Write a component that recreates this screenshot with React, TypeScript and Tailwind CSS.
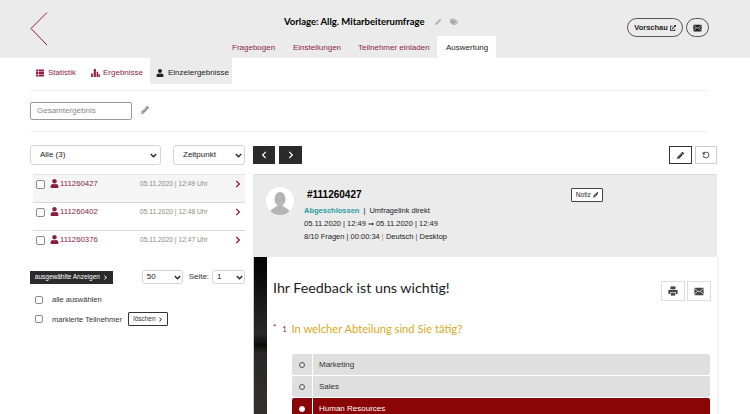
import React from 'react';
import { FaUser, FaTags, FaPencilAlt, FaChevronRight, FaChevronLeft, FaThList, FaExternalLinkAlt, FaLongArrowAltRight } from 'react-icons/fa';
import { MdRefresh } from 'react-icons/md';

const RED = 'text-[#8c1d3f]';

const MailIcon = ({ className = '' }: { className?: string }) => (
  <svg viewBox="0 0 12 10" className={className}>
    <rect x="0.5" y="0.5" width="11" height="9" rx="0.8" fill="currentColor" />
    <path d="M0.8 1.6 L6 5.6 L11.2 1.6 M0.8 8.6 L4.4 4.6 M11.2 8.6 L7.6 4.6" fill="none" stroke="#fff" strokeWidth="0.8" />
  </svg>
);

const PrintIcon = ({ className = '' }: { className?: string }) => (
  <svg viewBox="0 0 12 12" className={className}>
    <path d="M3 0.5 H9 V4 H3 Z" fill="currentColor" />
    <path d="M0.5 4.8 H11.5 V9.5 H9.5 V7.5 H2.5 V9.5 H0.5 Z" fill="currentColor" />
    <path d="M3.3 8.3 H8.7 V11.5 H3.3 Z" fill="currentColor" />
  </svg>
);

const BarsIcon = ({ className = '' }: { className?: string }) => (
  <svg viewBox="0 0 10 9" className={className}>
    <path d="M0 5 H2 V9 H0 Z M3 0 H5.4 V9 H3 Z M6.2 3 H8 V9 H6.2 Z M8.5 6 H10 V9 H8.5 Z" fill="currentColor" />
  </svg>
);

const Check = ({ className = '' }: { className?: string }) => (
  <span className={`block w-[8px] h-[8px] rounded-[2px] border border-[#8a8a8a] bg-white shrink-0 ${className}`} />
);

const Select = ({ label, className = '' }: { label: string; className?: string }) => (
  <div className={`flex items-center justify-between bg-white border border-[#d4d4d4] rounded-[3px] text-[#222] ${className}`}>
    <span>{label}</span>
    <svg width="7" height="5" viewBox="0 0 7 5" className="shrink-0">
      <path d="M0.8 1 L3.5 3.8 L6.2 1" fill="none" stroke="#222" strokeWidth="1.3" />
    </svg>
  </div>
);

const ListRow = ({ id, date, active }: { id: string; date: string; active?: boolean }) => (
  <div className={`h-[28px] border-b border-[#d8d8d8] pt-[3px] pl-[3px] pr-[3px] flex items-start ${active ? 'bg-[#f5f5f5]' : ''}`}>
    <Check className="mt-[2px] w-[9px] h-[9px]" />
    <FaUser className={`ml-[5px] mt-[1px] text-[9px] ${RED}`} />
    <span className={`ml-[1px] w-[80px] text-[7.8px] leading-[11px] ${RED}`}>{id}</span>
    <span className="text-[6.7px] leading-[11px] text-[#8a8a7a] flex-1 whitespace-nowrap">{date}</span>
    <FaChevronRight className="mt-[2px] text-[8px] text-[#8b0f2e]" />
  </div>
);

const Answer = ({ label, selected }: { label: string; selected?: boolean }) => (
  <div className="flex gap-[1px] h-[21px] mb-[1px]">
    <div className={`w-[20px] flex items-center justify-center rounded-l-[2px] ${selected ? 'bg-[#8a0505]' : 'bg-[#dfdfdf]'}`}>
      <span className={`block w-[6px] h-[6px] rounded-full border ${selected ? 'bg-white border-white' : 'border-[#555]'}`} />
    </div>
    <div className={`flex-1 flex items-center pl-[6px] text-[8px] rounded-r-[2px] ${selected ? 'bg-[#8a0505] text-white' : 'bg-[#dfdfdf] text-[#333]'}`}>
      {label}
    </div>
  </div>
);

export default function App() {
  return (
    <div className="w-[750px] h-[414px] overflow-hidden bg-white font-['Liberation_Sans',Arial,sans-serif]">
      {/* Header */}
      <header className="h-[58px] bg-[#ebebeb] flex">
        <div className="w-[232px] pl-[30px] pt-[12px]">
          <svg width="18" height="34" viewBox="0 0 18 34">
            <path d="M17 0.5 L1 16.5 L17 33" fill="none" stroke="#8c1d3f" strokeWidth="1" />
          </svg>
        </div>
        <div className="w-[264px] flex flex-col">
          <div className="h-[36px] pl-[52px] pt-[15px] flex items-start">
            <span className="font-['Lato',sans-serif] font-bold text-[9.5px] leading-[14px] text-black whitespace-nowrap">Vorlage: Allg. Mitarbeiterumfrage</span>
            <FaPencilAlt className="ml-[10px] mt-[4px] text-[6px] text-[#aaa]" />
            <FaTags className="ml-[9px] mt-[3px] text-[8px] text-[#aaa]" />
          </div>
          <nav className={`flex-1 flex text-[8px] ${RED}`}>
            <span className="pt-[6px] w-[61px]">Fragebogen</span>
            <span className="pt-[6px] w-[65px]">Einstellungen</span>
            <span className="pt-[6px] w-[79px] whitespace-nowrap">Teilnehmer einladen</span>
            <span className="pt-[6px] w-[59px] pl-[9px] bg-white text-[#222]">Auswertung</span>
          </nav>
        </div>
        <div className="flex-1 flex justify-end items-start pt-[18px] pr-[41px] gap-[3px]">
          <div className="h-[19px] w-[56px] rounded-full border border-[#555] flex items-center justify-center gap-[2px] text-[7.5px] font-bold text-[#222]">
            Vorschau <FaExternalLinkAlt className="text-[6px]" />
          </div>
          <div className="h-[19px] w-[23px] rounded-full border border-[#555] flex items-center justify-center text-[#222]">
            <MailIcon className="w-[9px] h-[8px]" />
          </div>
        </div>
      </header>

      {/* Sub tabs */}
      <div className="mx-[30px] w-[678px] h-[33px] border-b border-[#eeeeee] flex items-start text-[8px]">
        <div className={`flex items-center h-[26px] pt-[4px] pl-[6px] w-[61px] gap-[4px] ${RED}`}>
          <FaThList className="text-[8px]" /> Statistik
        </div>
        <div className={`flex items-center h-[26px] pt-[4px] w-[59px] gap-[3px] ${RED}`}>
          <BarsIcon className="w-[9px] h-[8px]" /> Ergebnisse
        </div>
        <div className="flex items-center h-[26px] pt-[4px] w-[82px] pl-[6px] gap-[4px] bg-[#ebebeb] text-[#222]">
          <FaUser className="text-[8px]" /> Einzelergebnisse
        </div>
      </div>

      {/* Result name */}
      <div className="mx-[30px] w-[678px] h-[41px] border-b border-[#eeeeee] flex items-start pt-[11px]">
        <div className="w-[102px] h-[18px] rounded-[2px] border border-[#999] flex items-center pl-[6px] text-[8px] text-[#888]">Gesamtergebnis</div>
        <FaPencilAlt className="ml-[9px] mt-[4px] text-[8px] text-[#888]" />
      </div>

      {/* Main */}
      <div className="flex pl-[30px] pt-[13px]">
        <aside className="w-[215px] shrink-0">
          <div className="flex justify-between h-[20px] text-[8px]">
            <Select label="Alle (3)" className="w-[131px] pl-[9px] pr-[3px]" />
            <Select label="Zeitpunkt" className="w-[72px] pl-[9px] pr-[2px]" />
          </div>
          <div className="mt-[9px] ml-[3px] border-t border-[#e4e4e4]">
            <ListRow id="111260427" date="05.11.2020 | 12:49 Uhr" active />
            <ListRow id="111260402" date="05.11.2020 | 12:48 Uhr" />
            <div className="[&>div]:border-b-0"><ListRow id="111260376" date="05.11.2020 | 12:47 Uhr" /></div>
          </div>
          <div className="mt-[11px] flex items-center">
            <div className="w-[83px] h-[13px] bg-[#2b2b2b] flex items-center justify-center gap-[3px] text-[6.5px] text-white whitespace-nowrap">
              ausgewählte Anzeigen <FaChevronRight className="text-[5px]" />
            </div>
            <Select label="50" className="ml-[29px] w-[41px] h-[14px] pl-[4px] pr-[1px] text-[8px]" />
            <span className="ml-[6px] text-[8px] text-[#333]">Seite:</span>
            <Select label="1" className="ml-[3px] w-[33px] h-[14px] pl-[4px] pr-[1px] text-[8px]" />
          </div>
          <div className="mt-[10px] flex items-center gap-[9px] pl-[5px] text-[7.5px] text-[#333]">
            <Check /> alle auswählen
          </div>
          <div className="mt-[7px] flex items-center pl-[5px] text-[7.5px] text-[#333]">
            <Check />
            <span className="ml-[9px]">markierte Teilnehmer</span>
            <div className="ml-[6px] h-[14px] w-[40px] border border-[#333] rounded-[1px] flex items-center justify-center gap-[2px] text-[6.5px]">
              löschen <FaChevronRight className="text-[5px]" />
            </div>
          </div>
        </aside>

        <main className="ml-[8px] w-[466px] shrink-0">
          <div className="h-[29px] flex items-start pt-[1px] pr-[2px]">
            <div className="w-[22px] h-[18px] bg-[#2b2b2b] text-white flex items-center justify-center"><FaChevronLeft className="text-[8px]" /></div>
            <div className="ml-[4px] w-[23px] h-[18px] bg-[#2b2b2b] text-white flex items-center justify-center"><FaChevronRight className="text-[8px]" /></div>
            <div className="ml-auto w-[23px] h-[18px] border border-[#333] flex items-center justify-center"><FaPencilAlt className="text-[7px] text-[#222]" /></div>
            <div className="ml-[3px] w-[22px] h-[18px] border border-[#ccc] flex items-center justify-center"><MdRefresh className="text-[10px] text-[#333] -scale-x-100" /></div>
          </div>

          <div className="h-[83px] bg-[#ebebeb] border-t border-[#d8d8d8] rounded-t-[2px] flex pl-[13px] pt-[12px] mr-[2px]">
            <div className="w-[28px] h-[28px] rounded-full bg-white overflow-hidden flex items-end justify-center shrink-0">
              <svg width="24" height="25" viewBox="0 0 24 25">
                <ellipse cx="12" cy="9" rx="5.5" ry="7" fill="#b5b5b5" />
                <path d="M1 25 C2 18 8 18 10 15 L14 15 C16 18 22 18 23 25 Z" fill="#b5b5b5" />
              </svg>
            </div>
            <div className="ml-[10px] w-[265px] text-[7.5px] text-[#222]">
              <div className="pl-[3px] pt-[2px] font-bold text-[10px] leading-[12px] text-black">#111260427</div>
              <div className="mt-[3px] leading-[13px]">
                <span className="font-bold text-[#2a9d9d]">Abgeschlossen</span>
                <span className="mx-[4px]">|</span>Umfragelink direkt
              </div>
              <div className="leading-[13px] flex items-center whitespace-pre">05.11.2020 | 12:49 <FaLongArrowAltRight className="text-[6px] mr-[2px]" />05.11.2020 | 12:49</div>
              <div className="leading-[13px]">8/10 Fragen | 00:00:34 <span className="text-[#c98a2b]">|</span> Deutsch <span className="text-[#2b4a9d]">|</span> Desktop</div>
            </div>
            <div className="ml-[2px] mt-[1px] w-[32px] h-[14px] bg-white border border-[#444] rounded-[1px] flex items-center justify-center gap-[2px] text-[6.5px] text-[#222]">
              Notiz <FaPencilAlt className="text-[5.5px]" />
            </div>
          </div>

          <div className="h-[160px] flex bg-white border-r-2 border-[#f3f3f3]">
            <div className="w-[14px] border-l border-[#cccccc] bg-[linear-gradient(to_bottom,#050505_0%,#0a0a0a_12%,#1c1c1c_30%,#2a2a2a_48%,#0c0c0c_55%,#2b2927_60%,#332f2c_100%)]" />
            <div className="flex-1 relative pl-[6px]">
              <div className="font-['Lato',sans-serif] text-[14.25px] leading-[20px] text-[#222] pt-[21px]">Ihr Feedback ist uns wichtig!</div>
              <div className="absolute right-[6px] top-[24px] flex gap-[2px]">
                <div className="w-[24px] h-[20px] border border-[#ddd] flex items-center justify-center text-[#444]"><PrintIcon className="w-[10px] h-[10px]" /></div>
                <div className="w-[24px] h-[20px] border border-[#ddd] flex items-center justify-center text-[#444]"><MailIcon className="w-[10px] h-[9px]" /></div>
              </div>
              <div className="mt-[24px] flex items-start font-['Lato',sans-serif]">
                <span className="text-[8px] text-[#8a0505] leading-[10px]">*</span>
                <span className="ml-[6px] text-[7px] text-[#8a0505] leading-[14px]">1</span>
                <span className="ml-[5px] text-[11.2px] leading-[14px] text-[#d9a922]">In welcher Abteilung sind Sie tätig?</span>
              </div>
              <div className="mt-[18px] ml-[19px] mr-[7px]">
                <Answer label="Marketing" />
                <Answer label="Sales" />
                <Answer label="Human Resources" selected />
              </div>
            </div>
          </div>
        </main>
      </div>
    </div>
  );
}
